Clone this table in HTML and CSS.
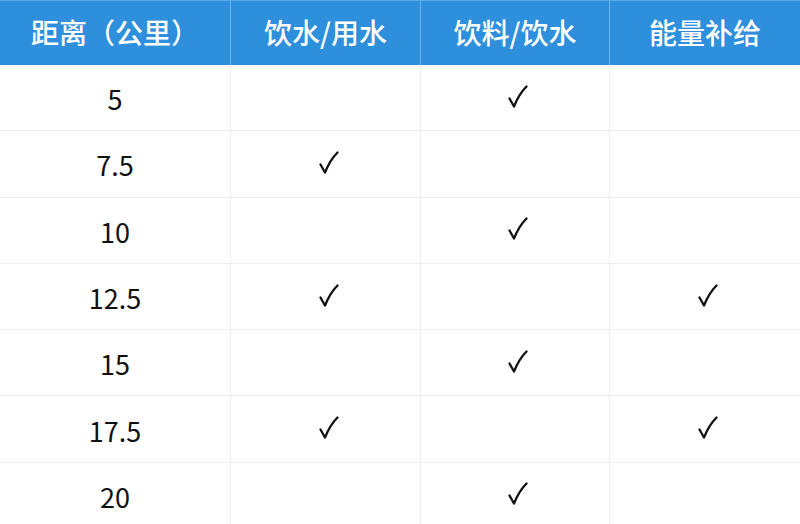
FILE: index.html
```html
<!DOCTYPE html>
<html lang="zh">
<head>
<meta charset="utf-8">
<link rel="stylesheet" href="styles.css">
</head>
<body>
<div class="table">
  <div class="cell head">距离（公里）</div>
  <div class="cell head">饮水/用水</div>
  <div class="cell head">饮料/饮水</div>
  <div class="cell head">能量补给</div>

  <div class="cell num">5</div><div class="cell"></div><div class="cell"><svg class="chk" viewBox="0 0 20 24"><path d="M1.5 13.5 L6 21.5 C9 14 13 7 18.5 1.5"/></svg></div><div class="cell"></div>
  <div class="cell num">7.5</div><div class="cell"><svg class="chk" viewBox="0 0 20 24"><path d="M1.5 13.5 L6 21.5 C9 14 13 7 18.5 1.5"/></svg></div><div class="cell"></div><div class="cell"></div>
  <div class="cell num">10</div><div class="cell"></div><div class="cell"><svg class="chk" viewBox="0 0 20 24"><path d="M1.5 13.5 L6 21.5 C9 14 13 7 18.5 1.5"/></svg></div><div class="cell"></div>
  <div class="cell num">12.5</div><div class="cell"><svg class="chk" viewBox="0 0 20 24"><path d="M1.5 13.5 L6 21.5 C9 14 13 7 18.5 1.5"/></svg></div><div class="cell"></div><div class="cell"><svg class="chk" viewBox="0 0 20 24"><path d="M1.5 13.5 L6 21.5 C9 14 13 7 18.5 1.5"/></svg></div>
  <div class="cell num">15</div><div class="cell"></div><div class="cell"><svg class="chk" viewBox="0 0 20 24"><path d="M1.5 13.5 L6 21.5 C9 14 13 7 18.5 1.5"/></svg></div><div class="cell"></div>
  <div class="cell num">17.5</div><div class="cell"><svg class="chk" viewBox="0 0 20 24"><path d="M1.5 13.5 L6 21.5 C9 14 13 7 18.5 1.5"/></svg></div><div class="cell"></div><div class="cell"><svg class="chk" viewBox="0 0 20 24"><path d="M1.5 13.5 L6 21.5 C9 14 13 7 18.5 1.5"/></svg></div>
  <div class="cell num">20</div><div class="cell"></div><div class="cell"><svg class="chk" viewBox="0 0 20 24"><path d="M1.5 13.5 L6 21.5 C9 14 13 7 18.5 1.5"/></svg></div><div class="cell"></div>
</div>
</body>
</html>
```

FILE: styles.css
```css
html, body {
  margin: 0;
  padding: 0;
  background: #ffffff;
  overflow: hidden;
}
body {
  width: 800px;
  height: 524px;
  font-family: "Noto Sans CJK SC", "Noto Sans", sans-serif;
}
.table {
  display: grid;
  grid-template-columns: 231px 190px 189px 190px;
  grid-template-rows: 65px repeat(7, 66.3px);
}
.cell {
  display: flex;
  align-items: center;
  justify-content: center;
  border-right: 1px solid #efefef;
  border-bottom: 1px solid #ededed;
  box-sizing: border-box;
  color: #111;
}
.cell:nth-child(4n) {
  border-right: none;
}
.head {
  background: #2e8fdd;
  color: #ffffff;
  font-size: 28px;
  font-weight: 500;
  border-top: 1px solid #5aa9ea;
  border-right: 1px solid #6cb4ee;
  border-bottom: none;
  padding-bottom: 2px;
}
.num {
  font-size: 27px;
  font-weight: 400;
  padding-top: 2px;
}
.chk {
  width: 20px;
  height: 24px;
  fill: none;
  stroke: #111;
  stroke-width: 2.3;
  stroke-linecap: round;
  stroke-linejoin: round;
  margin-left: 6px;
  margin-top: -2px;
}
```
